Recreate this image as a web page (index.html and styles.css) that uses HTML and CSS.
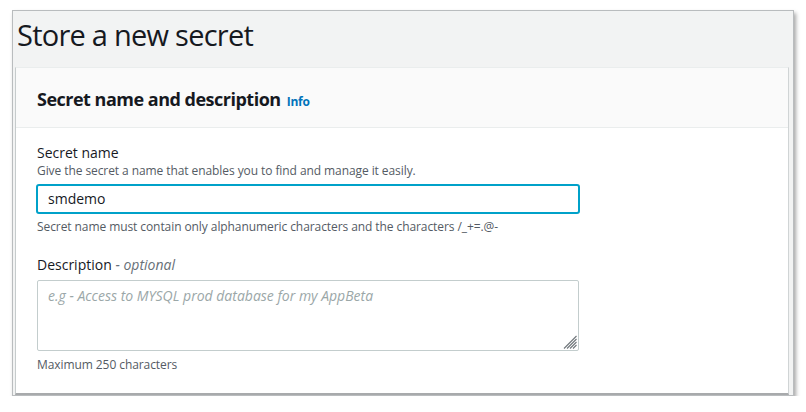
FILE: index.html
```html
<!DOCTYPE html>
<html>
<head>
<meta charset="utf-8">
<link rel="stylesheet" href="styles.css">
</head>
<body>
<div class="frame">
  <h1 class="page-title">Store a new secret</h1>
  <div class="panel">
    <div class="panel-header">
      <h2 class="panel-title">Secret name and description</h2>
      <span class="info">Info</span>
    </div>
    <div class="panel-body">
      <div class="field">
        <div class="label">Secret name</div>
        <div class="hint">Give the secret a name that enables you to find and manage it easily.</div>
        <div class="input focused">smdemo</div>
        <div class="constraint">Secret name must contain only alphanumeric characters and the characters /_+=.@-</div>
      </div>
      <div class="field field-desc">
        <div class="label">Description <span class="optional">- optional</span></div>
        <div class="textarea">
          <span class="placeholder">e.g - Access to MYSQL prod database for my AppBeta</span>
          <svg class="grip" width="14" height="14" viewBox="0 0 14 14">
            <g stroke="#6f757b" stroke-width="1.1">
              <line x1="1" y1="13.5" x2="13.5" y2="1"/>
              <line x1="4" y1="13.5" x2="13.5" y2="4"/>
              <line x1="7" y1="13.5" x2="13.5" y2="7"/>
              <line x1="10" y1="13.5" x2="13.5" y2="10"/>
            </g>
          </svg>
        </div>
        <div class="constraint">Maximum 250 characters</div>
      </div>
    </div>
  </div>
</div>
</body>
</html>
```

FILE: styles.css
```css
html, body {
  margin: 0;
  padding: 0;
  background: #ffffff;
}
body {
  font-family: "Open Sans", "Noto Sans", sans-serif;
  color: #16191f;
}
.frame {
  margin: 10px 0 0 12px;
  width: 780px;
  height: 384px;
  border: 1px solid #b9bcbe;
  background: #f2f3f3;
  box-shadow: 2px 3px 4px rgba(0, 0, 0, 0.35);
  display: flex;
  flex-direction: column;
  overflow: hidden;
}
.page-title {
  margin: 0;
  padding: 4px 0 0 4px;
  height: 52px;
  font-size: 29px;
  font-weight: 400;
  line-height: 40px;
  color: #16191f;
  letter-spacing: -0.75px;
}
.panel {
  margin: 0 4px 0 2px;
  flex: 1;
  background: #ffffff;
  border-left: 1px solid #c6cbcc;
  border-right: 1px solid #d0d4d5;
  border-top: 1px solid #eaeded;
  border-bottom: 2px solid #a8aaac;
  display: flex;
  flex-direction: column;
}
.panel-header {
  background: #fafafa;
  height: 59px;
  border-bottom: 1px solid #eaeded;
  display: flex;
  align-items: center;
  padding-left: 21px;
  gap: 6px;
}
.panel-title {
  margin: 0;
  font-size: 18px;
  font-weight: 700;
  line-height: 22px;
  color: #16191f;
  padding-top: 3px;
  letter-spacing: -0.5px;
}
.info {
  font-size: 12px;
  font-weight: 700;
  color: #0073bb;
  padding-top: 7px;
  letter-spacing: -0.2px;
}
.panel-body {
  padding: 15px 21px 0 21px;
  display: flex;
  flex-direction: column;
}
.label {
  font-size: 14px;
  line-height: 20px;
  color: #16191f;
}
.optional {
  font-style: italic;
  color: #687078;
}
.hint, .constraint {
  font-size: 12px;
  line-height: 16px;
  color: #545b64;
  letter-spacing: -0.08px;
}
.hint {
  margin-bottom: 5px;
}
.input {
  width: 530px;
  height: 26px;
  border: 2px solid #00a1c9;
  border-radius: 3px;
  box-sizing: content-box;
  font-size: 14px;
  line-height: 26px;
  padding-left: 10px;
  color: #16191f;
  margin-left: -1px;
}
.constraint {
  margin-top: 5px;
}
.field-desc {
  margin-top: 20px;
}
.textarea {
  position: relative;
  margin-top: 5px;
  width: 530px;
  height: 64px;
  border: 1px solid #c3cdcd;
  border-radius: 2px;
  padding: 5px 0 0 10px;
  font-size: 14px;
}
.placeholder {
  font-style: italic;
  color: #9ba7a8;
}
.grip {
  position: absolute;
  right: 1px;
  bottom: 1px;
}
.field-desc .constraint {
  margin-top: 6px;
}
```
